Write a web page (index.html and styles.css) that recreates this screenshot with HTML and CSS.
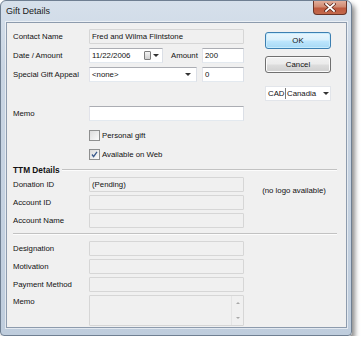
FILE: index.html
```html
<!DOCTYPE html>
<html>
<head>
<meta charset="utf-8">
<link rel="stylesheet" href="styles.css">
</head>
<body>
<div class="window">
  <div class="titlebar">
    <span class="title">Gift Details</span>
    <div class="close">
      <svg width="12" height="9" viewBox="0 0 12 9"><path d="M2 1 L10 8 M10 1 L2 8" stroke="#5a2418" stroke-width="3.2" stroke-linecap="square"/><path d="M2 1 L10 8 M10 1 L2 8" stroke="#fff" stroke-width="1.8" stroke-linecap="square"/></svg>
    </div>
  </div>
  <div class="client">
    <div class="top">
      <div class="form">
        <div class="row"><span class="lbl">Contact Name</span><div class="field dis w-full">Fred and Wilma Flintstone</div></div>
        <div class="row gap4"><span class="lbl">Date / Amount</span>
          <div class="field w-date">11/22/2006<span class="cal"></span><span class="tri"></span></div>
          <span class="amt-lbl">Amount</span>
          <div class="field w-amt">200</div>
        </div>
        <div class="row gap4"><span class="lbl">Special Gift Appeal</span>
          <div class="field w-appeal">&lt;none&gt;<span class="tri right"></span></div>
          <div class="field w-amt ml5">0</div>
        </div>
        <div class="row gap24"><span class="lbl">Memo</span><div class="field w-full"></div></div>
        <div class="check gap9"><span class="box"></span>Personal gift</div>
        <div class="check gap8"><span class="box"><svg width="9" height="9" viewBox="0 0 9 9"><path d="M2 4.5 L3.6 6.6 L7 1.8" fill="none" stroke="#3a5a8c" stroke-width="1.3"/></svg></span>Available on Web</div>
      </div>
      <div class="side">
        <div class="btn ok">OK</div>
        <div class="btn cancel">Cancel</div>
        <div class="combo"><span class="cur">CAD</span><span class="cname">Canadia</span><span class="tri"></span></div>
      </div>
    </div>

    <div class="heading"><span>TTM Details</span><span class="hline"></span></div>

    <div class="ttm">
      <div class="form">
        <div class="row gap1"><span class="lbl">Donation ID</span><div class="field dis w-full">(Pending)</div></div>
        <div class="row gap3"><span class="lbl">Account ID</span><div class="field dis w-full"></div></div>
        <div class="row gap3"><span class="lbl">Account Name</span><div class="field dis w-full"></div></div>
      </div>
      <div class="logo">(no logo available)</div>
    </div>

    <div class="sep"></div>

    <div class="form">
      <div class="row gap6"><span class="lbl">Designation</span><div class="field dis w-full"></div></div>
      <div class="row gap3"><span class="lbl">Motivation</span><div class="field dis w-full"></div></div>
      <div class="row gap3"><span class="lbl">Payment Method</span><div class="field dis w-full"></div></div>
      <div class="row memo gap3"><span class="lbl">Memo</span>
        <div class="field dis w-full tall"><span class="sb"><span class="up"></span><span class="down"></span></span></div>
      </div>
    </div>
  </div>
</div>
</body>
</html>
```

FILE: styles.css
```css
html, body {
  margin: 0;
  padding: 0;
  background: #ffffff;
}
body {
  font-family: "Liberation Sans", Arial, sans-serif;
  font-size: 7.8px;
  color: #111;
}
.window {
  width: 352px;
  height: 336px;
  box-sizing: border-box;
  border: 1px solid #6f7f92;
  border-radius: 6px 6px 4px 4px;
  background: linear-gradient(180deg, #d6e0eb 0%, #c9d5e3 20%, #c5d2e1 60%, #bfcddd 100%);
  box-shadow: 3px 4px 5px rgba(0,0,0,0.45);
}
.titlebar {
  height: 21px;
  display: flex;
  justify-content: space-between;
  align-items: flex-start;
  padding-left: 5px;
}
.title {
  font-size: 9px;
  color: #1a1a1a;
  line-height: 21px;
}
.close {
  width: 34px;
  height: 14px;
  margin-right: 4px;
  box-sizing: border-box;
  border: 1px solid #6a3427;
  border-top: none;
  border-radius: 0 0 4px 4px;
  background: linear-gradient(180deg, #e2ae9b 0%, #d08a72 45%, #bf5a3f 55%, #c2694c 100%);
  display: flex;
  justify-content: center;
  align-items: center;
}
.client {
  margin-left: 5px;
  width: 341px;
  height: 306px;
  box-sizing: border-box;
  background: #f0f0f0;
  border: 1px solid #8d9bad;
  box-shadow: 0 0 0 1px rgba(255,255,255,0.55);
  padding: 6px 9px 0 6px;
}
.top {
  display: flex;
}
.form {
  width: 231px;
}
.row {
  display: flex;
  align-items: center;
  height: 15px;
}
.row.memo {
  align-items: flex-start;
  height: 31px;
}
.row.memo .lbl {
  line-height: 13px;
}
.gap1 { margin-top: 1px; }
.gap3 { margin-top: 3px; }
.gap4 { margin-top: 4px; }
.gap6 { margin-top: 6px; }
.gap8 { margin-top: 8px; }
.gap9 { margin-top: 9px; }
.gap24 { margin-top: 24px; }
.lbl {
  width: 76px;
  flex: none;
  white-space: nowrap;
}
.field {
  position: relative;
  height: 15px;
  box-sizing: border-box;
  background: #fff;
  border: 1px solid;
  border-color: #abadb3 #dbdfe6 #e3e9ef #e2e3ea;
  padding: 0 2px;
  line-height: 13px;
  white-space: nowrap;
  overflow: hidden;
  flex: none;
}
.field.dis {
  background: #f0f0f0;
  border-color: #d6d6d6;
  border-radius: 1px;
}
.field.tall {
  height: 31px;
}
.w-full { width: 155px; }
.w-date { width: 74px; display: flex; align-items: center; }
.w-amt { width: 42px; }
.w-appeal { width: 108px; display: flex; align-items: center; }
.ml5 { margin-left: 5px; }
.amt-lbl {
  margin-left: 8px;
  width: 31px;
}
.cal {
  margin-left: auto;
  width: 7px;
  height: 9px;
  box-sizing: border-box;
  border: 1px solid #7d7d7d;
  border-radius: 1px;
  background: linear-gradient(180deg, #f4f4f4, #cfcfcf);
}
.tri {
  width: 0;
  height: 0;
  border-left: 3px solid transparent;
  border-right: 3px solid transparent;
  border-top: 3px solid #333;
  margin-left: 2px;
  margin-right: 1px;
}
.tri.right {
  margin-left: auto;
  margin-right: 3px;
}
.check {
  display: flex;
  align-items: center;
  height: 11px;
  padding-left: 76px;
}
.box {
  width: 11px;
  height: 11px;
  box-sizing: border-box;
  border: 1px solid #8e8f8f;
  background: linear-gradient(135deg, #dcdcdc, #fbfbfb);
  margin-right: 2px;
  display: flex;
  align-items: center;
  justify-content: center;
}
.side {
  margin-left: 21px;
  width: 66px;
  display: flex;
  flex-direction: column;
}
.btn {
  height: 17px;
  box-sizing: border-box;
  border-radius: 3px;
  text-align: center;
  line-height: 15px;
}
.btn.ok {
  margin-top: 3px;
  border: 1px solid #3c7fb1;
  background: linear-gradient(180deg, #eaf6fd 0%, #d9f0fc 48%, #bee6fd 52%, #a7d9f5 100%);
  box-shadow: inset 0 0 0 1px #c8ecfd;
}
.btn.cancel {
  margin-top: 7px;
  border: 1px solid #707070;
  background: linear-gradient(180deg, #f2f2f2 0%, #ebebeb 48%, #dddddd 52%, #cfcfcf 100%);
  box-shadow: inset 0 0 0 1px #fbfbfb;
}
.combo {
  margin-top: 13px;
  height: 15px;
  box-sizing: border-box;
  background: #fff;
  border: 1px solid #e2e5ea;
  display: flex;
  align-items: center;
  padding-left: 2px;
  overflow: hidden;
}
.cur {
  width: 16px;
  border-right: 1px solid #7a7a7a;
  line-height: 11px;
  padding-right: 1px;
}
.cname {
  margin-left: 1px;
  width: 37px;
  overflow: hidden;
  white-space: nowrap;
}
.combo .tri {
  margin-left: 2px;
}
.heading {
  margin-top: 4px;
  height: 12px;
  display: flex;
  align-items: center;
  font-weight: bold;
  font-size: 8.3px;
}
.hline {
  flex: 1;
  margin-left: 2px;
  border-top: 1px solid #c2c2c2;
  border-bottom: 1px solid #fcfcfc;
}
.ttm {
  display: flex;
}
.logo {
  margin-left: 7px;
  width: 86px;
  text-align: center;
  padding-top: 10px;
}
.sep {
  margin-top: 5px;
  border-top: 1px solid #c2c2c2;
  border-bottom: 1px solid #fcfcfc;
}
.sb {
  position: absolute;
  right: 0;
  top: 0;
  bottom: 0;
  width: 12px;
  border-left: 1px solid #e4e4e4;
  display: flex;
  flex-direction: column;
  justify-content: space-between;
  align-items: center;
  padding: 6px 0 6px;
  box-sizing: border-box;
}
.up {
  border-left: 2.5px solid transparent;
  border-right: 2.5px solid transparent;
  border-bottom: 2.5px solid #a8a8a8;
}
.down {
  border-left: 2.5px solid transparent;
  border-right: 2.5px solid transparent;
  border-top: 2.5px solid #a8a8a8;
}
```
